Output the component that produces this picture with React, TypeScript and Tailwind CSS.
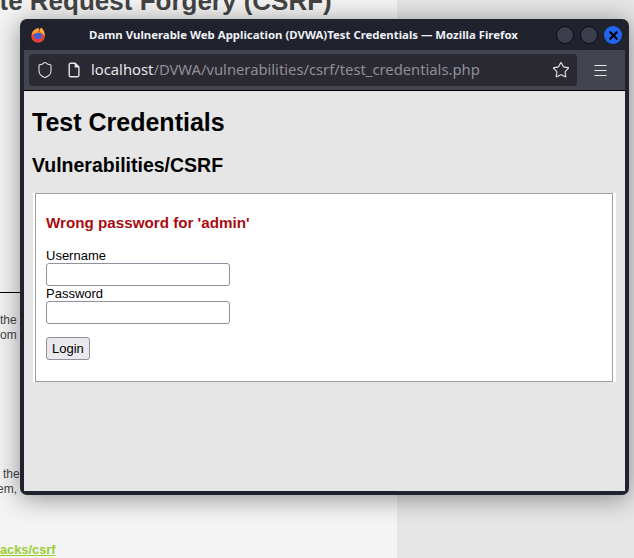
import { Menu, Shield, Star, X } from "lucide-react";

function FirefoxLogo() {
  return (
    <svg width="16" height="16" viewBox="0 0 16 16" className="shrink-0">
      <circle cx="8" cy="9" r="6.8" fill="#e5413a" />
      <path d="M2 8 C2 4 5 1.5 9 1 C8.5 2 9 3 10 3.4 C12.5 4 14.6 6 15 9 C15 5 13 1.5 11 0.5 C11.5 2 11 3 10 3 Z" fill="#ffa436" />
      <path d="M10 1 C13 3 15 6 14.7 9.5 C13.5 7.5 12 6 10 5.5 Z" fill="#ffb330" />
      <circle cx="8" cy="8.6" r="3.6" fill="#3a5fd9" />
      <path d="M5 5.5 C6.5 4 9.5 4.2 11 6 C9.5 5.6 7 5.6 5 7 Z" fill="#ff8f2e" />
    </svg>
  );
}

function PageIcon() {
  return (
    <svg width="16" height="16" viewBox="0 0 16 16" fill="none" stroke="#e4e4e7" strokeWidth="1.4" strokeLinejoin="round" className="shrink-0">
      <path d="M3.2 2.8 a1.5 1.5 0 0 1 1.5-1.5 h4.6 l3.6 3.6 v8.3 a1.5 1.5 0 0 1-1.5 1.5 h-6.7 a1.5 1.5 0 0 1-1.5-1.5 z" />
      <path d="M9.3 1.3 v3.6 h3.6" fill="#e4e4e7" />
    </svg>
  );
}

function Field({ label, type }: { label: string; type: string }) {
  return (
    <div className="flex flex-col">
      <label className="h-[15px] text-[13px] leading-[15px] text-black">{label}</label>
      <input
        type={type}
        className="h-[23px] w-[184px] rounded-[3px] border border-[#8f8f9d] bg-white"
      />
    </div>
  );
}

export default function App() {
  return (
    <div className="relative h-[558px] w-[634px] overflow-hidden bg-[#e6e6e6] font-['Liberation_Sans',sans-serif]">
      {/* page behind the popup */}
      <div className="flex h-full w-[397px] flex-col bg-[#f4f4f4]">
        <h1 className="mt-[-13px] ml-[-106px] whitespace-nowrap text-[26px] leading-[28px] font-bold text-[#444444]">
          Cross Site Request Forgery (CSRF)
        </h1>
        <div className="mt-[277px] h-px w-full bg-black" />
        <p className="mt-[20px] text-[12px] leading-[15px] text-[#444444]">
          the
          <br />
          om
        </p>
        <p className="mt-[124px] text-[12px] leading-[15px] text-[#444444]">
          <span className="ml-[3px] block">the</span>
          <span className="ml-[-3px] block">em,</span>
        </p>
        <a className="mt-[45px] text-[12.8px] leading-[15px] font-bold text-[#9acd32] underline">acks/csrf</a>
      </div>

      {/* popup window */}
      <div className="absolute top-[19px] left-[20px] flex h-[476px] w-[609px] flex-col overflow-hidden rounded-[7px] bg-[#20232e] shadow-[0_3px_26px_rgba(0,0,0,0.42)]">
        <div className="relative flex h-[31px] shrink-0 items-center justify-center">
          <div className="absolute top-[8px] left-[10px]">
            <FirefoxLogo />
          </div>
          <span className="ml-[-42px] font-['Noto_Sans',sans-serif] text-[11.4px] font-bold text-[#eef1f6]">
            Damn Vulnerable Web Application (DVWA)Test Credentials — Mozilla Firefox
          </span>
          <div className="absolute top-[7px] right-[7px] flex gap-[6px]">
            <div className="size-[18px] rounded-full border border-[#0c0d12] bg-[#3a3e4d]" />
            <div className="size-[18px] rounded-full border border-[#0c0d12] bg-[#3a3e4d]" />
            <div className="flex size-[18px] items-center justify-center rounded-full bg-[#2166f0]">
              <X size={13} strokeWidth={4} className="text-black" />
            </div>
          </div>
        </div>

        <div className="mx-[4px] flex h-[40px] shrink-0 items-center gap-[8px] bg-[#42444e] pr-[16px] pl-[5px]">
          <div className="flex h-[32px] flex-1 items-center rounded-[4px] bg-[#2b2a33] pr-[7px] pl-[7px]">
            <Shield size={18} strokeWidth={1.4} className="shrink-0 text-[#e4e4e7]" />
            <div className="ml-[12px]">
              <PageIcon />
            </div>
            <span className="mb-[2px] ml-[9px] font-['Noto_Sans',sans-serif] text-[14.77px] text-[#8f8f96]">
              <span className="text-[#e4e4e7]">localhost</span>/DVWA/vulnerabilities/csrf/test_credentials.php
            </span>
            <Star size={18} strokeWidth={1.5} className="ml-auto shrink-0 text-[#e4e4e7]" />
          </div>
          <Menu size={17} strokeWidth={1.5} className="ml-[7px] shrink-0 text-[#e4e4e7]" />
        </div>

        <div className="mx-[4px] mb-[4px] min-h-0 flex-1 border-t border-black bg-[#e6e6e6] text-black">
          <div className="pt-[16px] pl-[8px]">
            <h1 className="text-[25px] leading-[30px] font-bold">Test Credentials</h1>
            <h2 className="mt-[17px] text-[19.5px] leading-[23px] font-bold">Vulnerabilities/CSRF</h2>
          </div>
          <div className="mt-[16px] ml-[9px] w-[583px] border-r-[3px] border-l-2 border-white">
            <div className="h-[189px] border border-[#a0a0a0] bg-white pt-[20px] pl-[10px]">
              <h3 className="text-[15.2px] leading-[17px] font-bold text-[#a80c10]">Wrong password for 'admin'</h3>
              <div className="mt-[17px] flex flex-col">
                <Field label="Username" type="text" />
                <Field label="Password" type="password" />
              </div>
              <button className="mt-[13px] h-[23px] rounded-[3px] border border-[#8f8f9d] bg-[#e9e9ed] px-[5px] pt-px text-[13px] text-black">
                Login
              </button>
            </div>
          </div>
        </div>
      </div>
    </div>
  );
}
